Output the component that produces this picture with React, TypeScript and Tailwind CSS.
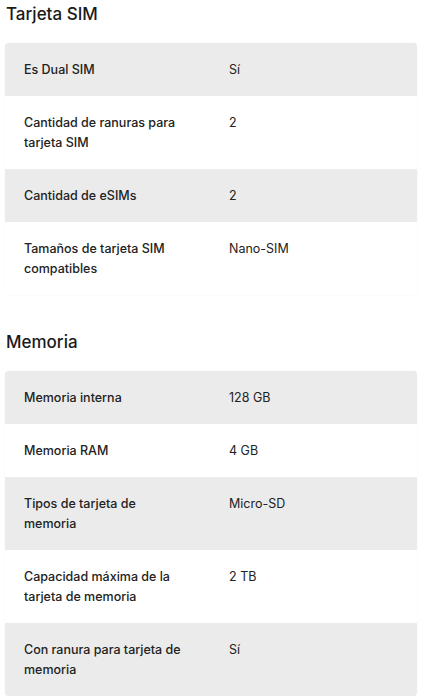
import React from "react";

type Row = { label: string; value: string };

const sim: Row[] = [
  { label: "Es Dual SIM", value: "Sí" },
  { label: "Cantidad de ranuras para tarjeta SIM", value: "2" },
  { label: "Cantidad de eSIMs", value: "2" },
  { label: "Tamaños de tarjeta SIM compatibles", value: "Nano-SIM" },
];

const memoria: Row[] = [
  { label: "Memoria interna", value: "128 GB" },
  { label: "Memoria RAM", value: "4 GB" },
  { label: "Tipos de tarjeta de memoria", value: "Micro-SD" },
  { label: "Capacidad máxima de la tarjeta de memoria", value: "2 TB" },
  { label: "Con ranura para tarjeta de memoria", value: "Sí" },
];

function SpecTable({ title, rows }: { title: string; rows: Row[] }) {
  return (
    <section>
      <h2 className="px-[6px] text-[17px] leading-[28px] font-medium text-[#1a1a1a]">
        {title}
      </h2>
      <div className="mt-[15px] mx-[5px] rounded-[4px] overflow-hidden bg-white shadow-[0_0_1px_rgba(0,0,0,0.12)]">
        {rows.map((r, i) => (
          <div
            key={r.label}
            className={`flex pt-[17px] pb-[16px] text-[12.5px] leading-[20px] text-[#222] ${
              i % 2 === 0 ? "bg-[#ebebeb]" : "bg-white"
            }`}
          >
            <div className="w-[224px] pl-[19px] pr-[47px] font-medium">{r.label}</div>
            <div className="flex-1">{r.value}</div>
          </div>
        ))}
      </div>
    </section>
  );
}

export default function App() {
  return (
    <div className="w-[422px] h-[696px] bg-white overflow-hidden font-['Inter',sans-serif]">
      <SpecTable title="Tarjeta SIM" rows={sim} />
      <div className="h-[33px]" />
      <SpecTable title="Memoria" rows={memoria} />
    </div>
  );
}
